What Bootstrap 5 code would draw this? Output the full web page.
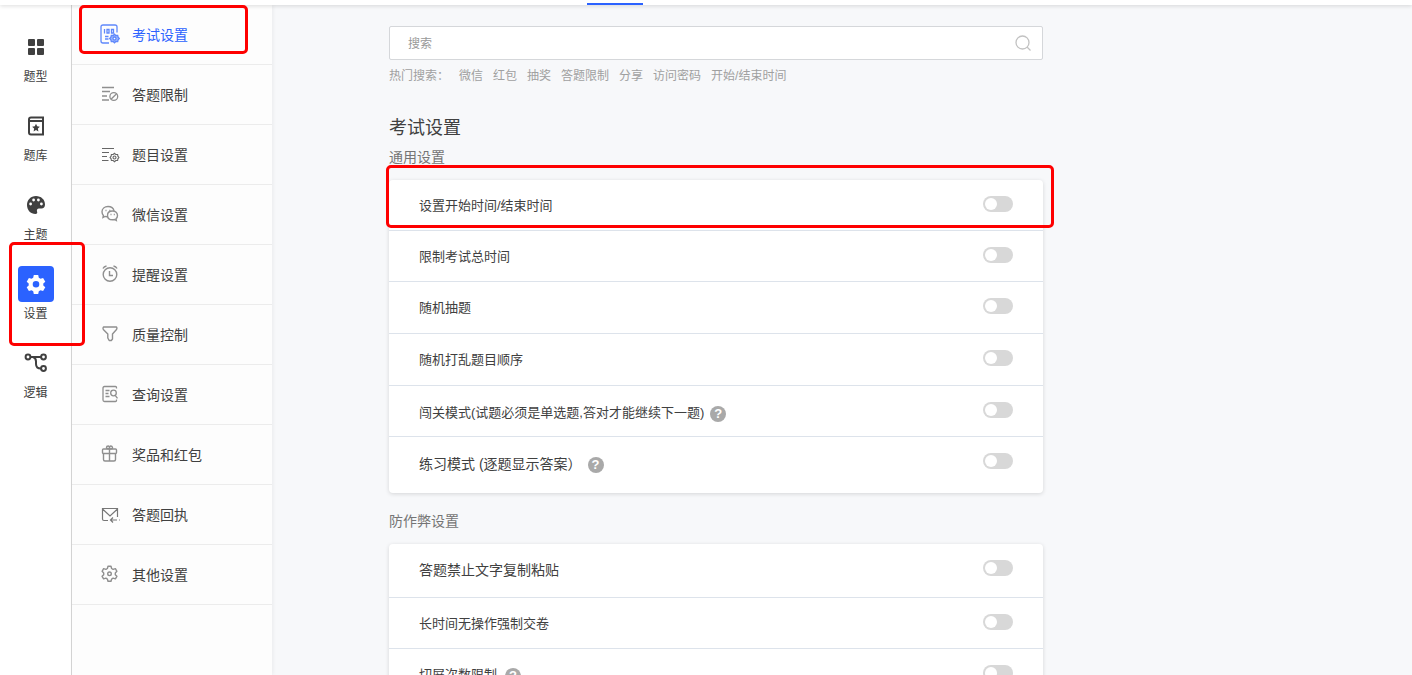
<!DOCTYPE html>
<html lang="zh-CN">
<head>
<meta charset="utf-8">
<meta name="viewport" content="width=device-width, initial-scale=1">
<title>考试设置</title>
<link href="https://cdn.jsdelivr.net/npm/bootstrap@5.3.0/dist/css/bootstrap.min.css" rel="stylesheet">
<style>
  :root { --accent: #2b62ff; --ink: #404040; --line: #ececec; }
  body { font-family: "Liberation Sans", "Noto Sans CJK SC", sans-serif; font-size: 14px; line-height: 20px; color: var(--ink); background: #f7f8fa; }
  a { color: inherit; text-decoration: none; }

  .topbar { height: 5px; box-shadow: 0 1px 4px rgba(0,0,0,.14); z-index: 3; }
  .topbar-tab { width: 56px; height: 2px; margin-left: 587px; background: var(--accent); }
  .workspace { min-height: 0; }

  .rail { width: 72px; padding-top: 24px; gap: 22px; border-right: 1px solid #d6d6d6; }
  .rail-link { font-size: 12px; line-height: 18px; width: 71px; }
  .rail-icon { width: 36px; height: 36px; border-radius: 4px; margin-bottom: 3px; margin-left: 1px; }
  .rail-link.current .rail-icon { background: var(--accent); color: #fff; }

  .side { width: 200px; background: #fdfdfd; box-shadow: 1px 0 4px rgba(0,0,0,.06); }
  .side-link { height: 60px; padding-left: 28px; gap: 12px; border-bottom: 1px solid var(--line); }
  .side-link svg { color: #8f8f8f; margin-bottom: 1px; }
  .side-link.current, .side-link.current svg { color: var(--accent); }

  .main-pane { padding: 21px 24px 24px 117px; scrollbar-width: none; }
  .main-pane::-webkit-scrollbar { display: none; }
  .content { max-width: 654px; }

  .search-input { height: 34px; padding: 1px 44px 0 18px; font-size: 12px; border: 1px solid #d5d7da; border-radius: 2px; }
  .search-input::placeholder { color: #999; }
  .search-btn { right: 10px; top: 7px; color: #c2c2c2; line-height: 1; }
  .hot { font-size: 12px; line-height: 18px; gap: 10px; margin-top: 7px; color: #a0a0a0; }
  .page-title { font-size: 18px; line-height: 26px; margin: 30px 0 0; font-weight: 400; }
  .group-title { font-size: 14px; line-height: 20px; margin: 6px 0 13px; font-weight: 400; color: #757575; }

  .panel { background: #fff; border-radius: 4px; box-shadow: 0 1px 4px rgba(0,0,0,.14); margin-bottom: 18px; }
  .opt { height: 51px; padding: 16px 30px 0; font-size: 13px; border-bottom: 1px solid #dde3eb; }
  .opt:last-child { border-bottom: 0; }
  .opt-mid { height: 52px; }
  .opt-large { height: 54px; font-size: 14px; }
  .opt-end { height: 56px; font-size: 14px; }
  .opt-help, .opt-end { padding-top: 17px; }
  .help-row { gap: 6px; }
  .help { width: 16px; height: 16px; border-radius: 50%; background: #a9a9a9; color: #fff; font-size: 13px; line-height: 16px; font-weight: 700; margin-top: 3px; }

  .toggle { appearance: none; width: 30px; height: 16px; border-radius: 8px; background: #d8d8d8; cursor: pointer; display: grid; align-items: center; padding: 0 2px; margin: 0; }
  .opt-help .toggle, .opt-end .toggle { margin-top: -1px; }
  .toggle::before { content: ""; width: 12px; height: 12px; border-radius: 50%; background: #fff; }
  .toggle:checked { background: var(--accent); justify-content: end; }

  /* Red call-out frames lying over the items they point at */
  .frame { border: 3px solid #fe0000; border-radius: 5px; pointer-events: none; z-index: 5; }
  .frame-rail { inset: -24px -14px -23px 9px; }
  .frame-side { inset: 0 24px 10px 7px; }
  .frame-opt { inset: -15px -11px 2px -3px; }
</style>
</head>
<body>
<div class="vh-100 d-flex flex-column overflow-hidden">
  <header class="topbar bg-white position-relative flex-shrink-0 d-flex align-items-end">
    <a class="topbar-tab d-block" href="#" aria-label="编辑"></a>
  </header>

  <div class="workspace d-flex flex-grow-1">
    <nav class="rail bg-white flex-shrink-0 d-flex flex-column" aria-label="编辑工具">
      <a class="rail-link d-flex flex-column align-items-center" href="#">
        <span class="rail-icon d-flex align-items-center justify-content-center"><svg width="18" height="18" viewBox="0 0 18 18" fill="currentColor"><rect x="1" y="1" width="7" height="7" rx="1"/><rect x="10" y="1" width="7" height="7" rx="1"/><rect x="1" y="10" width="7" height="7" rx="1"/><rect x="10" y="10" width="7" height="7" rx="1"/></svg></span>
        题型
      </a>
      <a class="rail-link d-flex flex-column align-items-center" href="#">
        <span class="rail-icon d-flex align-items-center justify-content-center"><svg width="18" height="20" viewBox="0 0 18 20"><path d="M16 5V1.500H4Q2 1.500 2 3.500V16.500Q2 18.500 4 18.500H16V5H3" fill="none" stroke="currentColor" stroke-width="2"/><path d="M9 7.800l1.200 2.500 2.700.4-2 1.900.5 2.800L9 14.100l-2.400 1.300.5-2.800-2-1.900 2.700-.4z" fill="currentColor"/></svg></span>
        题库
      </a>
      <a class="rail-link d-flex flex-column align-items-center" href="#">
        <span class="rail-icon d-flex align-items-center justify-content-center"><svg width="20" height="20" viewBox="0 0 20 20"><path d="M10 1C4.500 1 1 5 1 10s3.500 9 8.500 9c1.500 0 2.100-1 1.600-2.200-.7-1.500.1-3.300 1.900-3.300h2.500c2 0 3.500-1.500 3.500-4C19 4.500 15 1 10 1z" fill="currentColor"/><g fill="#fff"><circle cx="4.600" cy="9" r="1.400"/><circle cx="7.600" cy="5" r="1.400"/><circle cx="12.400" cy="5" r="1.400"/><circle cx="15.400" cy="9" r="1.400"/></g></svg></span>
        主题
      </a>
      <a class="rail-link current position-relative d-flex flex-column align-items-center" href="#" aria-current="page">
        <span class="rail-icon d-flex align-items-center justify-content-center"><svg width="24" height="24" viewBox="0 0 24 24" fill="currentColor"><path fill-rule="evenodd" d="M9.800 3h4.400l.6 2.700 1.700 1 2.600-.8 2.200 3.800-2 1.800v2l2 1.800-2.200 3.800-2.600-.8-1.700 1-.6 2.700H9.800l-.6-2.700-1.700-1-2.600.8-2.200-3.800 2-1.800v-2l-2-1.800 2.200-3.800 2.600.8 1.700-1zM12 9a3.300 3.300 0 1 0 0 6.600A3.300 3.300 0 0 0 12 9z"/></svg></span>
        设置
        <span class="frame frame-rail position-absolute"></span>
      </a>
      <a class="rail-link d-flex flex-column align-items-center" href="#">
        <span class="rail-icon d-flex align-items-center justify-content-center"><svg width="24" height="20" viewBox="0 0 24 20" fill="none" stroke="currentColor" stroke-width="2"><circle cx="4" cy="4" r="2.400"/><circle cx="19.500" cy="4" r="2.400"/><circle cx="19.500" cy="15.500" r="2.400"/><path d="M6.500 4H17M9 4q3 1 3 4.500v2.500q0 4.500 5 4.500"/></svg></span>
        逻辑
      </a>
    </nav>

    <nav class="side flex-shrink-0" aria-label="设置分类">
      <a class="side-link current position-relative d-flex align-items-center" href="#" aria-current="page">
        <svg width="20" height="20" viewBox="0 0 20 20" fill="none" stroke="#5f88fb" stroke-width="1.300"><path d="M17 8.500V3q0-2-2-2H3Q1 1 1 3v14q0 2 2 2h6"/><path d="M4.500 5v4.500M7 5.500h2v3.500H7zM11.500 5.500h2v3.500h-2zM5 12.500h3.500M5 15h3.500"/><path d="M14.500 10.200l1.300 1.300 1.900-.1.400 1.800 1.200 1.300-1.200 1.300-.4 1.800-1.900-.1-1.300 1.300-1.300-1.300-1.900.1-.4-1.800-1.200-1.300 1.200-1.300.4-1.800 1.900.1z" fill="#9db7ff"/><circle cx="14.500" cy="14.500" r="1.500" fill="#fff"/></svg>
        <span>考试设置</span>
        <span class="frame frame-side position-absolute"></span>
      </a>
      <a class="side-link d-flex align-items-center" href="#">
        <svg width="20" height="20" viewBox="0 0 20 20" fill="none" stroke="currentColor" stroke-width="1.300"><path d="M2 3.500h12M2 7.500h8M2 12h5M2 16h7"/><circle cx="13.800" cy="12.500" r="3.900"/><path d="M11 15.300l5.600-5.600"/></svg>
        <span>答题限制</span>
      </a>
      <a class="side-link d-flex align-items-center" href="#">
        <svg width="20" height="20" viewBox="0 0 20 20" fill="none" stroke="#666" stroke-width="1.100"><path d="M2 4.500h12M2 8.500h7M2 12.500h5M2 16.500h6.500"/><path d="M14.500 9.300l1.300 1.200 1.800 0 .3 1.700 1 1.300-1 1.300-.3 1.700-1.800 0-1.300 1.200-1.300-1.200-1.800 0-.3-1.700-1-1.300 1-1.300.3-1.700 1.800 0z"/><circle cx="14.500" cy="13.500" r="1.500"/></svg>
        <span>题目设置</span>
      </a>
      <a class="side-link d-flex align-items-center" href="#">
        <svg width="20" height="20" viewBox="0 0 20 20" fill="none" stroke="currentColor" stroke-width="1.400"><path d="M7 12.800q-1 0-2-.4L3 13.500l.4-2.100Q2 10 2 7.800C2 4.600 4.700 2.500 8 2.500s5.500 1.900 6 4.300"/><path d="M12.500 7c-3 0-5 1.900-5 4.400s2 4.400 5 4.400q1.100 0 2-.3l1.800 1-.3-1.800q1.500-1.300 1.500-3.300c0-2.500-2-4.400-5-4.400z"/><path d="M5.500 6.500h1M9.300 6.500h1M10.500 10.500h1M13.800 10.500h1"/></svg>
        <span>微信设置</span>
      </a>
      <a class="side-link d-flex align-items-center" href="#">
        <svg width="20" height="20" viewBox="0 0 20 20" fill="none" stroke="currentColor" stroke-width="1.400"><circle cx="10" cy="10.500" r="6.800"/><path d="M9.500 7v4.500h3.500M3 4.500q1-2 3.500-2.500M17 4.500q-1-2-3.500-2.500"/></svg>
        <span>提醒设置</span>
      </a>
      <a class="side-link d-flex align-items-center" href="#">
        <svg width="20" height="20" viewBox="0 0 20 20" fill="none" stroke="currentColor" stroke-width="1.400" stroke-linejoin="round"><path d="M3.500 3h13q1 1 0 2.500L12.500 10v5l-1.200 1.500H9.200L7.800 14v-4L3.300 5.500Q2.500 4 3.500 3z"/></svg>
        <span>质量控制</span>
      </a>
      <a class="side-link d-flex align-items-center" href="#">
        <svg width="20" height="20" viewBox="0 0 20 20" fill="none" stroke="currentColor" stroke-width="1.300"><path d="M16.500 4.500V3.500q0-1-1-1h-11q-1.500 0-1.500 1.500v12q0 1.500 1.500 1.500h11q1 0 1-1v-1M5.500 6.500h4M5.500 9.500h3M5.500 12.500h4"/><circle cx="13.500" cy="9" r="2.800"/><path d="M15.200 11.300l2.300 3"/></svg>
        <span>查询设置</span>
      </a>
      <a class="side-link d-flex align-items-center" href="#">
        <svg width="20" height="20" viewBox="0 0 20 20" fill="none" stroke="currentColor" stroke-width="1.400"><rect x="2.500" y="5" width="14" height="4.500" rx="1"/><path d="M3.500 9.500v6q0 1.500 1.500 1.500h9q1.500 0 1.500-1.500v-6M9.500 5v12M9.500 5q-3 0-3-1.500t1.700-1.500Q9.500 2 9.500 5q0-3 1.300-3t1.700 1.500T9.500 5"/></svg>
        <span>奖品和红包</span>
      </a>
      <a class="side-link d-flex align-items-center" href="#">
        <svg width="20" height="20" viewBox="0 0 20 20" fill="none" stroke="#777" stroke-width="1.200"><path d="M8 16.500H4q-1.500 0-1.500-1.500V4.500h15V13M2.500 5l7.500 7 7.500-7M19 16h.8M17 16h-6.500M13 13.500L10.500 16l2.500 2.500"/></svg>
        <span>答题回执</span>
      </a>
      <a class="side-link d-flex align-items-center" href="#">
        <svg width="20" height="20" viewBox="0 0 20 20" fill="none" stroke="currentColor" stroke-width="1.400" stroke-linejoin="round"><path d="M8 2.300h3l.6 2.200 1.500.9 2.300-.7 1.500 2.600-1.600 1.600v1.800l1.600 1.600-1.500 2.600-2.300-.7-1.500.9-.6 2.200H8l-.6-2.200-1.500-.9-2.300.7-1.500-2.600 1.600-1.600V8.900L2.100 7.300l1.500-2.600 2.300.7 1.500-.9z"/><circle cx="9.500" cy="9.800" r="1.800"/></svg>
        <span>其他设置</span>
      </a>
    </nav>

    <main class="main-pane flex-grow-1 overflow-auto">
      <div class="content">
        <form class="position-relative">
          <input class="search-input form-control shadow-none" type="search" placeholder="搜索" aria-label="搜索">
          <button class="search-btn btn p-0 border-0 position-absolute" type="button" aria-label="开始搜索"><svg width="20" height="20" viewBox="0 0 20 20" fill="none" stroke="currentColor" stroke-width="1.300"><circle cx="9.500" cy="9.500" r="6.500"/><path d="M14 14l3.500 3.500"/></svg></button>
        </form>
        <div class="hot d-flex flex-wrap">
          <span>热门搜索：</span>
          <a href="#">微信</a><a href="#">红包</a><a href="#">抽奖</a><a href="#">答题限制</a><a href="#">分享</a><a href="#">访问密码</a><a href="#">开始/结束时间</a>
        </div>

        <h1 class="page-title">考试设置</h1>

        <h2 class="group-title">通用设置</h2>
        <section class="panel">
          <div class="opt position-relative d-flex justify-content-between align-items-start">
            <label for="o1">设置开始时间/结束时间</label><input class="toggle" type="checkbox" role="switch" id="o1">
            <span class="frame frame-opt position-absolute"></span>
          </div>
          <div class="opt d-flex justify-content-between align-items-start"><label for="o2">限制考试总时间</label><input class="toggle" type="checkbox" role="switch" id="o2"></div>
          <div class="opt opt-mid d-flex justify-content-between align-items-start"><label for="o3">随机抽题</label><input class="toggle" type="checkbox" role="switch" id="o3"></div>
          <div class="opt opt-mid d-flex justify-content-between align-items-start"><label for="o4">随机打乱题目顺序</label><input class="toggle" type="checkbox" role="switch" id="o4"></div>
          <div class="opt opt-help d-flex justify-content-between align-items-start">
            <div class="help-row d-flex"><label for="o5">闯关模式(试题必须是单选题,答对才能继续下一题)</label><span class="help text-center">?</span></div>
            <input class="toggle" type="checkbox" role="switch" id="o5">
          </div>
          <div class="opt opt-end d-flex justify-content-between align-items-start">
            <div class="help-row d-flex"><label for="o6">练习模式 (逐题显示答案）</label><span class="help text-center">?</span></div>
            <input class="toggle" type="checkbox" role="switch" id="o6">
          </div>
        </section>

        <h2 class="group-title">防作弊设置</h2>
        <section class="panel">
          <div class="opt opt-large d-flex justify-content-between align-items-start"><label for="o7">答题禁止文字复制粘贴</label><input class="toggle" type="checkbox" role="switch" id="o7"></div>
          <div class="opt d-flex justify-content-between align-items-start"><label for="o8">长时间无操作强制交卷</label><input class="toggle" type="checkbox" role="switch" id="o8"></div>
          <div class="opt d-flex justify-content-between align-items-start">
            <div class="d-flex gap-2"><label for="o9">切屏次数限制</label><span class="help text-center">?</span></div>
            <input class="toggle" type="checkbox" role="switch" id="o9">
          </div>
        </section>
      </div>
    </main>
  </div>
</div>
<script src="https://cdn.jsdelivr.net/npm/bootstrap@5.3.0/dist/js/bootstrap.bundle.min.js"></script>
</body>
</html>
